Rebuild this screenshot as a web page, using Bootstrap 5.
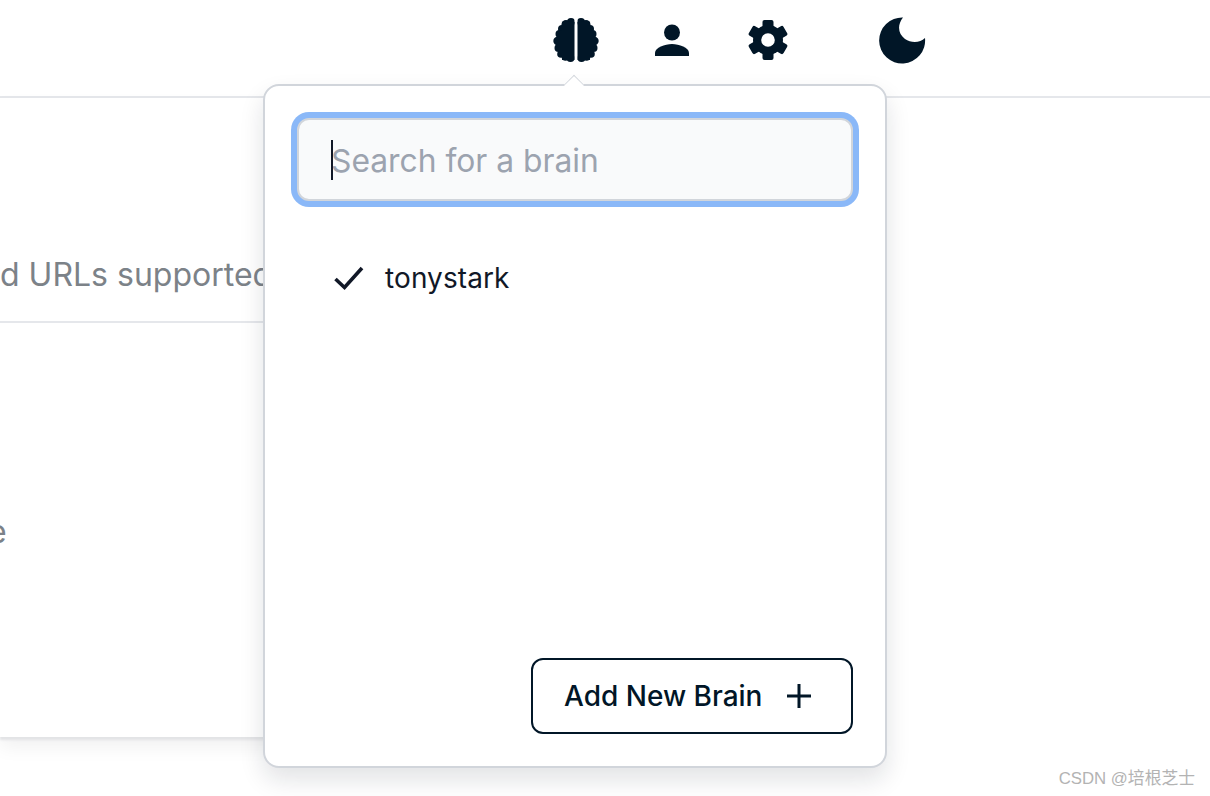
<!DOCTYPE html>
<html lang="en">
<head>
<meta charset="utf-8">
<title>Brain selector</title>
<link href="https://cdn.jsdelivr.net/npm/bootstrap@5.3.0/dist/css/bootstrap.min.css" rel="stylesheet">
<style>
html,body{height:796px;overflow:hidden;background:#fff;font-family:Inter,"Noto Sans CJK SC",sans-serif;color:#011627}
.topbar{height:98px;border-bottom:2px solid #e5e7eb;padding-left:552px;padding-top:16px;background:#fff}
.topbar svg{display:block;width:48px;height:48px;fill:#011627}
.moon-slot{margin-left:38px}
.under-panel{width:640px;height:639px;background:#fff;box-shadow:0 3px 2px #e3e4e6,0 10px 18px rgba(0,0,0,.06);padding-top:157px}
.under-text{font-size:32px;line-height:40px;color:#7c8288;white-space:nowrap}
.under-rule{border-top:2px solid #e5e7eb;margin-top:26px;margin-bottom:189px}
.under-tail{margin-left:-12px}
.brain-pop{position:absolute;left:263px;top:84px;width:624px;height:684px;background:#fff;border:2px solid #d1d5db;border-radius:16px;box-shadow:0 12px 24px rgba(17,24,39,.12);padding:32px 32px 32px 32px;z-index:5}
.pop-arrow{position:absolute;left:300px;top:-10px;width:18px;height:18px;background:#fff;border-left:1px solid #d1d5db;border-top:1px solid #d1d5db;transform:rotate(45deg) scale(.8)}
.search-wrap{position:relative}
.brain-search.form-control,.brain-search.form-control:focus{height:83px;background:#f9fafb;border:2px solid #d1d5db;border-radius:12px;box-shadow:0 0 0 6px #8ab8f8;font-size:31.800px;padding:2px 32px 0;color:#111827;font-family:inherit}
.brain-search::placeholder{color:#9ca3af;opacity:1}
.fake-caret{position:absolute;left:34px;top:22px;width:2px;height:40px;background:#111827}
.brain-row{font-size:28px;line-height:40px;color:#111827;margin-top:57px;padding-left:37px;gap:21px}
.brain-row span{letter-spacing:.1px}
.brain-row svg{width:30px;height:26px;stroke:#111827;stroke-width:3.6;fill:none}
.add-brain.btn{border:2px solid #011627;border-radius:12px;color:#011627;background:#fff;font-size:28px;font-weight:550;line-height:40px;height:76px;width:322px;padding:0 0 0 31px;gap:25px;justify-content:flex-start}
.add-brain svg{width:24px;height:24px;stroke:#011627;stroke-width:3;fill:none}
.mark-line{position:absolute;right:15px;bottom:6px;font-size:16.800px;line-height:22px;color:#b3b3b3;font-family:"Liberation Sans","Noto Sans CJK SC",sans-serif;z-index:6}
</style>
</head>
<body class="position-relative">
<nav class="topbar d-flex gap-5">
  <svg viewBox="0 0 48 48" role="img" aria-label="Brain">
    <defs>
      <clipPath id="halfclip"><rect x="0" y="0" width="22.500" height="48"/></clipPath>
      <g id="halfbrain" clip-path="url(#halfclip)">
        <circle cx="19" cy="6" r="4"/><circle cx="14" cy="8.500" r="4.500"/><circle cx="10" cy="13" r="4"/><circle cx="7.500" cy="18" r="4"/><circle cx="5.500" cy="25" r="4.200"/><circle cx="6.500" cy="32" r="4"/><circle cx="9" cy="38" r="3.800"/><circle cx="13.500" cy="41" r="3.800"/><circle cx="18.500" cy="42" r="4"/>
        <rect x="10" y="6" width="14" height="38"/><rect x="6" y="17" width="6" height="20"/>
      </g>
    </defs>
    <use href="#halfbrain"/>
    <use href="#halfbrain" transform="matrix(-1 0 0 1 48 0)"/>
  </svg>
  <svg viewBox="0 0 48 48" role="img" aria-label="Profile">
    <circle cx="24" cy="16.500" r="8"/>
    <path d="M7 40v-3c0-5.500 10-9 17-9s17 3.500 17 9v3z"/>
  </svg>
  <svg viewBox="0 0 48 48" role="img" aria-label="Settings">
    <circle cx="24" cy="24" r="15"/>
    <rect x="18.500" y="4" width="11" height="40" rx="2"/>
    <rect x="18.500" y="4" width="11" height="40" rx="2" transform="rotate(60 24 24)"/>
    <rect x="18.500" y="4" width="11" height="40" rx="2" transform="rotate(120 24 24)"/>
    <circle cx="24" cy="24" r="6.800" fill="#fff"/>
  </svg>
  <svg class="moon-slot" viewBox="0 0 48 48" role="img" aria-label="Dark mode">
    <path d="M25 1.500A23 23 0 1 0 47 22C42 27 33 27 27 23 20 18 19 9 25 1.500z"/>
  </svg>
</nav>
<main class="under-panel">
  <div class="under-text">d URLs supported</div>
  <div class="under-rule"></div>
  <div class="under-text under-tail">e</div>
</main>
<aside class="brain-pop d-flex flex-column">
  <span class="pop-arrow"></span>
  <div class="search-wrap">
    <input class="form-control brain-search" type="text" placeholder="Search for a brain">
    <span class="fake-caret"></span>
  </div>
  <div class="brain-row d-flex align-items-center">
    <svg viewBox="0 0 30 26"><path d="M1.500 14l9 8.500L28 3"/></svg>
    <span>tonystark</span>
  </div>
  <div class="mt-auto d-flex justify-content-end">
    <button class="btn add-brain d-flex align-items-center" type="button">Add New Brain
      <svg viewBox="0 0 24 24"><path d="M12 0v24M0 12h24"/></svg>
    </button>
  </div>
</aside>
<div class="mark-line">CSDN @培根芝士</div>
<script src="https://cdn.jsdelivr.net/npm/bootstrap@5.3.0/dist/js/bootstrap.bundle.min.js"></script>
</body>
</html>
